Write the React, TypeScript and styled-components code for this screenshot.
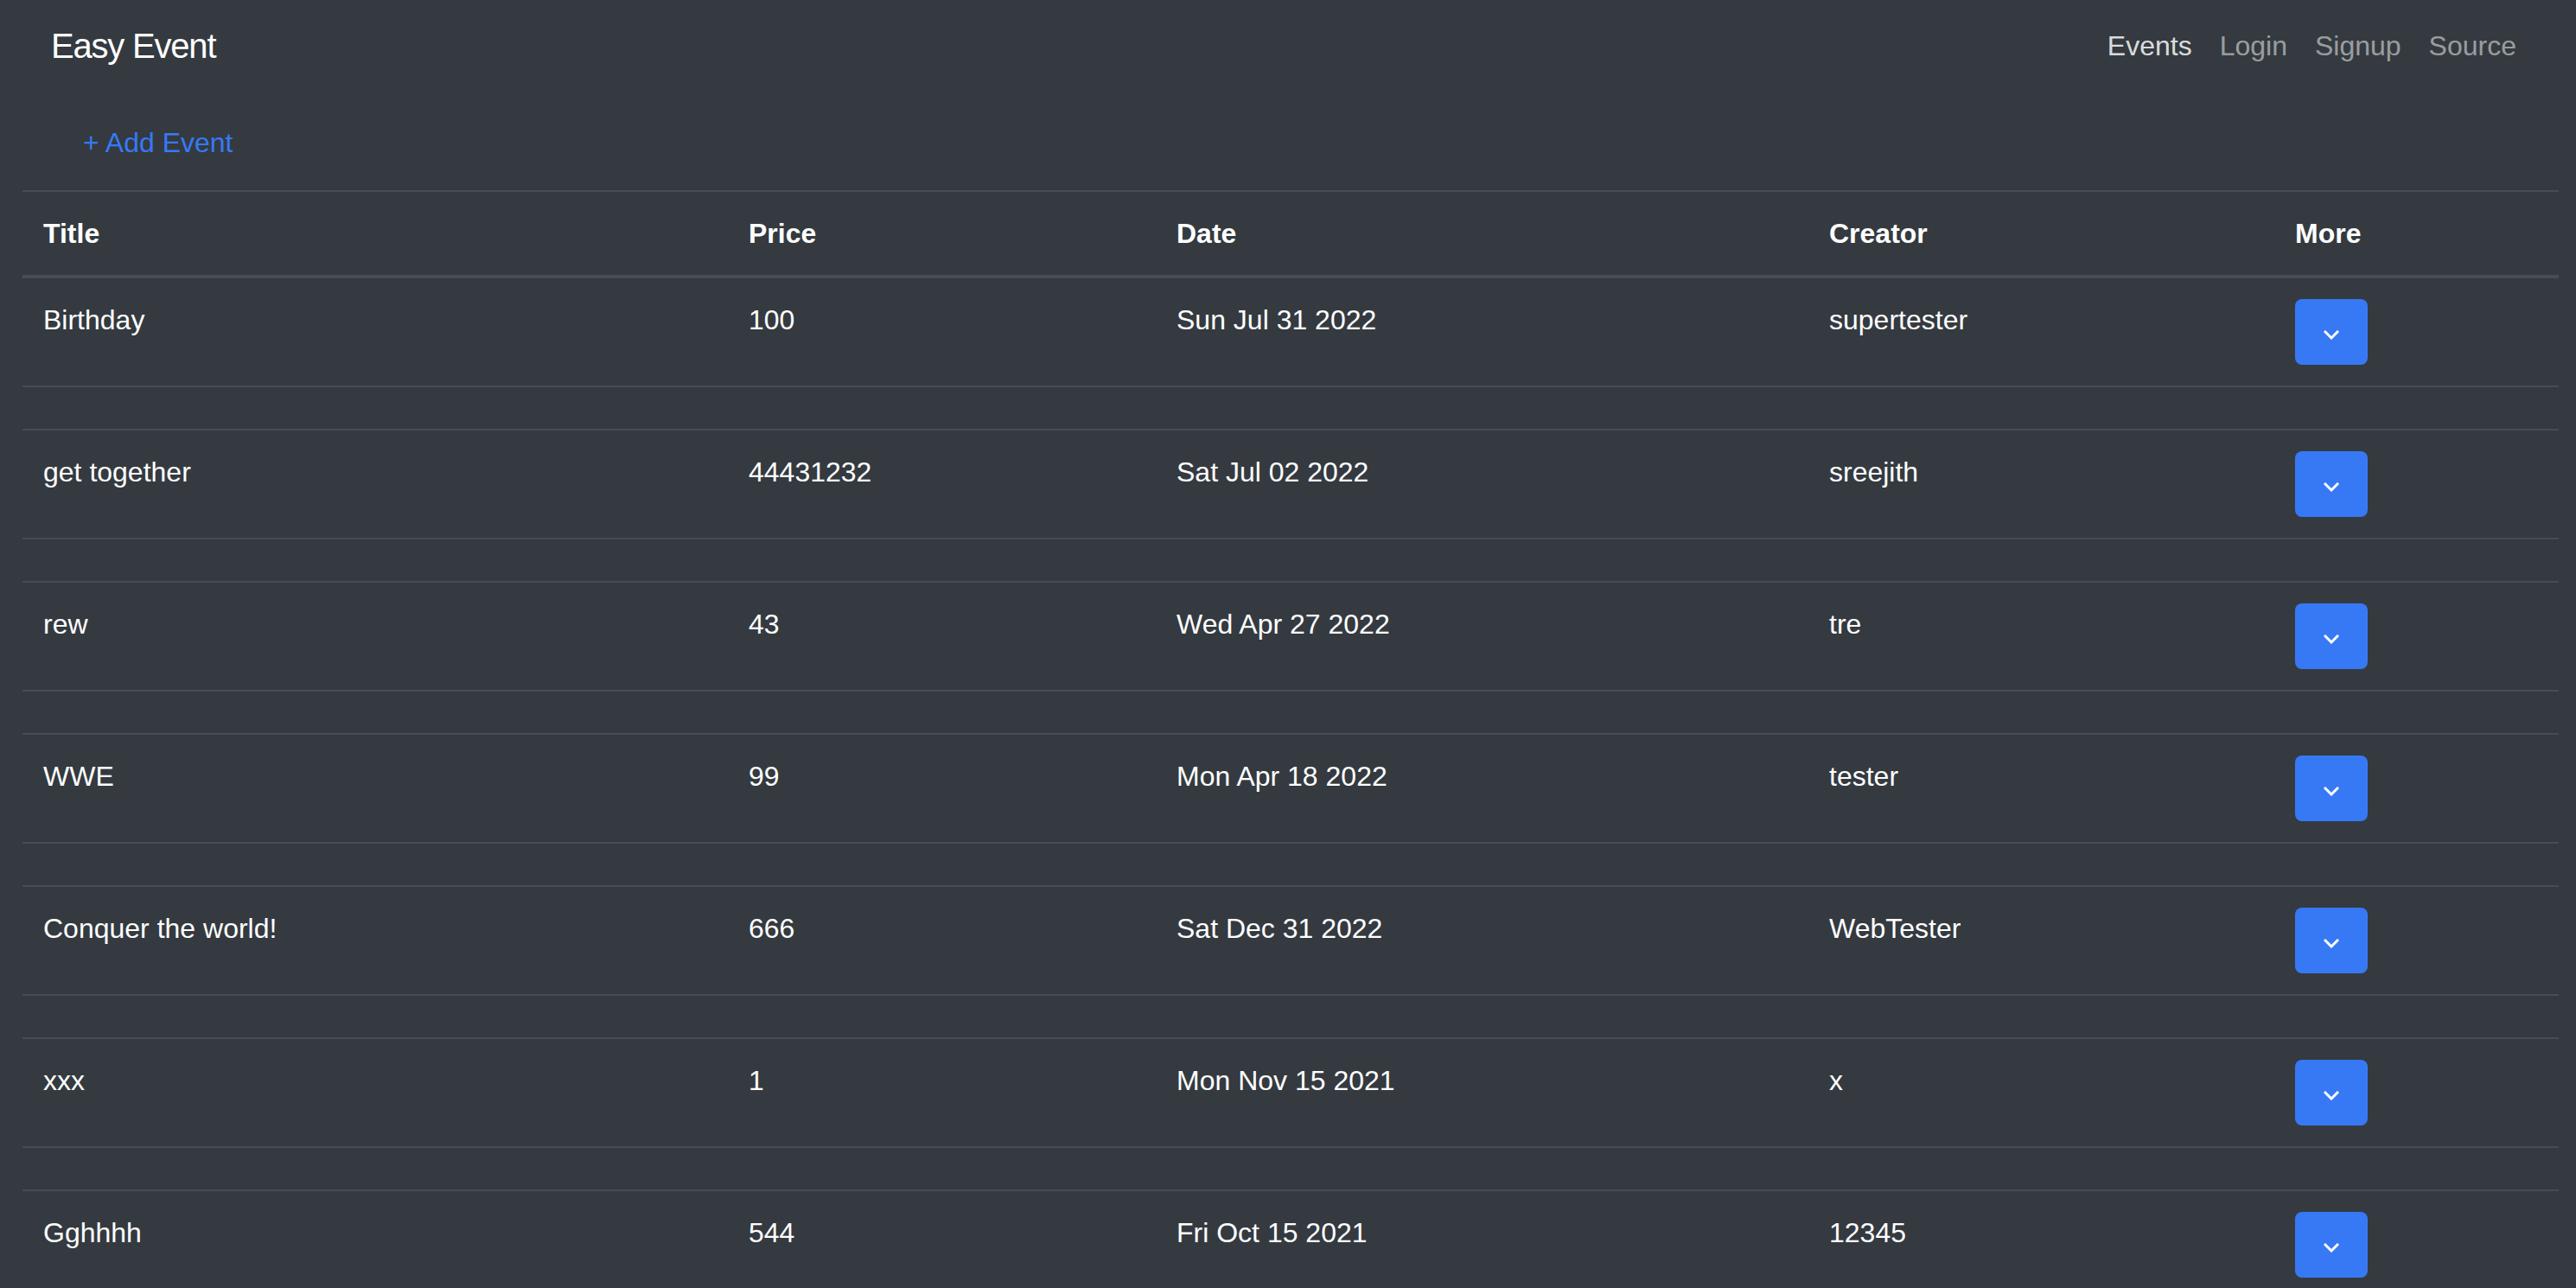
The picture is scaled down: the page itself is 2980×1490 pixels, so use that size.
import React from "react";
import styled, { createGlobalStyle } from "styled-components";

const GlobalStyle = createGlobalStyle`
  html, body {
    margin: 0;
    padding: 0;
    background: #343a40;
  }
  body {
    font-family: "Liberation Sans", Arial, Helvetica, sans-serif;
    color: #ffffff;
    font-size: 32px;
    line-height: 48px;
  }
  * { box-sizing: border-box; }
`;

const Page = styled.div`
  background: #343a40;
  min-height: 1490px;
`;

const Navbar = styled.nav`
  display: flex;
  justify-content: space-between;
  align-items: flex-start;
  height: 112px;
  padding: 23px 53px 0 59px;
`;

const Brand = styled.a`
  font-size: 40px;
  line-height: 60px;
  letter-spacing: -1.2px;
  color: #ffffff;
  text-decoration: none;
`;

const NavLinks = styled.div`
  display: flex;
  margin-top: 6px;
`;

const NavLink = styled.a<{ $active?: boolean }>`
  padding: 0 16px;
  font-size: 32px;
  line-height: 48px;
  color: ${(p) => (p.$active ? "rgba(255,255,255,0.84)" : "rgba(255,255,255,0.52)")};
  text-decoration: none;
`;

const Toolbar = styled.div`
  padding: 15px 0 17px 70px;
`;

const LinkButton = styled.button`
  border: 2px solid transparent;
  background: transparent;
  padding: 12px 24px;
  font-family: inherit;
  font-size: 32px;
  line-height: 48px;
  color: #3779f5;
  cursor: pointer;
`;

const TableWrap = styled.div`
  padding: 0 20px 0 26px;
`;

const Table = styled.table`
  width: 2934px;
  table-layout: fixed;
  border-collapse: collapse;
  color: #ffffff;
`;

const HeadCell = styled.th`
  text-align: left;
  font-weight: bold;
  font-size: 32px;
  line-height: 48px;
  padding: 24px;
  border-top: 2px solid #454d55;
  border-bottom: 4px solid #454d55;
  vertical-align: bottom;
`;

const Cell = styled.td`
  font-size: 32px;
  line-height: 48px;
  padding: 24px;
  border-top: 2px solid #454d55;
  vertical-align: top;
`;

const SpacerCell = styled.td`
  padding: 24px;
  border-top: 2px solid #454d55;
  height: 48px;
`;

const MoreButton = styled.button`
  display: inline-flex;
  align-items: center;
  justify-content: center;
  width: 84px;
  height: 76px;
  padding: 8px 0 0 0;
  border: none;
  border-radius: 8px;
  background: #3779f5;
  cursor: pointer;
`;

const Chevron = () => (
  <svg width="18" height="12" viewBox="0 0 18 12">
    <polyline
      points="2,2 9,9 16,2"
      fill="none"
      stroke="#ffffff"
      strokeWidth="3"
      strokeLinecap="square"
      strokeLinejoin="miter"
    />
  </svg>
);

const events = [
  { title: "Birthday", price: "100", date: "Sun Jul 31 2022", creator: "supertester" },
  { title: "get together", price: "44431232", date: "Sat Jul 02 2022", creator: "sreejith" },
  { title: "rew", price: "43", date: "Wed Apr 27 2022", creator: "tre" },
  { title: "WWE", price: "99", date: "Mon Apr 18 2022", creator: "tester" },
  { title: "Conquer the world!", price: "666", date: "Sat Dec 31 2022", creator: "WebTester" },
  { title: "xxx", price: "1", date: "Mon Nov 15 2021", creator: "x" },
  { title: "Gghhhh", price: "544", date: "Fri Oct 15 2021", creator: "12345" },
];

export default function App() {
  return (
    <Page>
      <GlobalStyle />
      <Navbar>
        <Brand href="#">Easy Event</Brand>
        <NavLinks>
          <NavLink $active href="#">Events</NavLink>
          <NavLink href="#">Login</NavLink>
          <NavLink href="#">Signup</NavLink>
          <NavLink href="#">Source</NavLink>
        </NavLinks>
      </Navbar>
      <Toolbar>
        <LinkButton>+ Add Event</LinkButton>
      </Toolbar>
      <TableWrap>
        <Table>
          <colgroup>
            <col style={{ width: 816 }} />
            <col style={{ width: 495 }} />
            <col style={{ width: 755 }} />
            <col style={{ width: 539 }} />
            <col style={{ width: 329 }} />
          </colgroup>
          <thead>
            <tr>
              <HeadCell>Title</HeadCell>
              <HeadCell>Price</HeadCell>
              <HeadCell>Date</HeadCell>
              <HeadCell>Creator</HeadCell>
              <HeadCell>More</HeadCell>
            </tr>
          </thead>
          <tbody>
            {events.map((e) => (
              <React.Fragment key={e.title}>
                <tr>
                  <Cell>{e.title}</Cell>
                  <Cell>{e.price}</Cell>
                  <Cell>{e.date}</Cell>
                  <Cell>{e.creator}</Cell>
                  <Cell>
                    <MoreButton aria-label="More">
                      <Chevron />
                    </MoreButton>
                  </Cell>
                </tr>
                <tr>
                  <SpacerCell colSpan={5} />
                </tr>
              </React.Fragment>
            ))}
          </tbody>
        </Table>
      </TableWrap>
    </Page>
  );
}
